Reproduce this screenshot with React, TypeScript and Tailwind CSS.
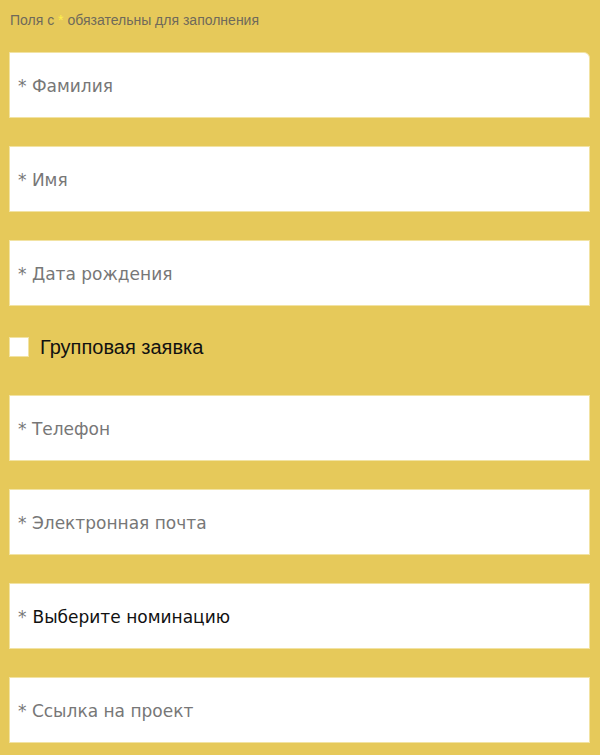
import React, { useState } from 'react';

const fields = ['Фамилия', 'Имя', 'Дата рождения'];
const fields2 = ['Телефон', 'Электронная почта'];

const Field: React.FC<{ label: string; first?: boolean }> = ({ label, first }) => (
  <div
    className={`h-[66px] w-[581px] bg-white border border-[#f2e3a3] flex items-center pl-[8px] pt-[3px] font-['DejaVu_Sans',sans-serif] text-[17px] text-[#777] ${first ? 'rounded-tr-[6px]' : ''}`}
  >
    * {label}
  </div>
);

const App: React.FC = () => {
  const [group, setGroup] = useState(false);

  return (
    <div className="w-[600px] h-[755px] bg-[#e6c95a] px-[9px] overflow-hidden">
      {/* Подсказка */}
      <div className="h-[52px] pt-[10px] pl-px font-['Liberation_Sans',sans-serif] text-[14px] text-[#6f6a5a]">
        Поля с <span className="text-[#fff04a]">*</span> обязательны для заполнения
      </div>

      <div className="flex flex-col gap-[28px]">
        {fields.map((f, i) => (
          <Field key={f} label={f} first={i === 0} />
        ))}
      </div>

      <label className="mt-[31px] mb-[38px] flex items-center gap-[11px] h-[20px] cursor-pointer">
        <span
          className={`w-[20px] h-[20px] bg-white border border-[#f2e3a3] ${group ? 'bg-[#333]' : ''}`}
          onClick={() => setGroup(!group)}
        />
        <span className="font-['Liberation_Sans',sans-serif] text-[20px] text-[#111]">Групповая заявка</span>
      </label>

      <div className="flex flex-col gap-[28px]">
        {fields2.map((f) => (
          <Field key={f} label={f} />
        ))}
        <div className="h-[66px] w-[581px] bg-white border border-[#f2e3a3] flex items-center pl-[8px] pt-[3px] font-['DejaVu_Sans',sans-serif] text-[17px] text-[#111]">
          <span className="text-[#777] mr-[6px]">*</span>Выберите номинацию
        </div>
        <Field label="Ссылка на проект" />
      </div>
    </div>
  );
};

export default App;
